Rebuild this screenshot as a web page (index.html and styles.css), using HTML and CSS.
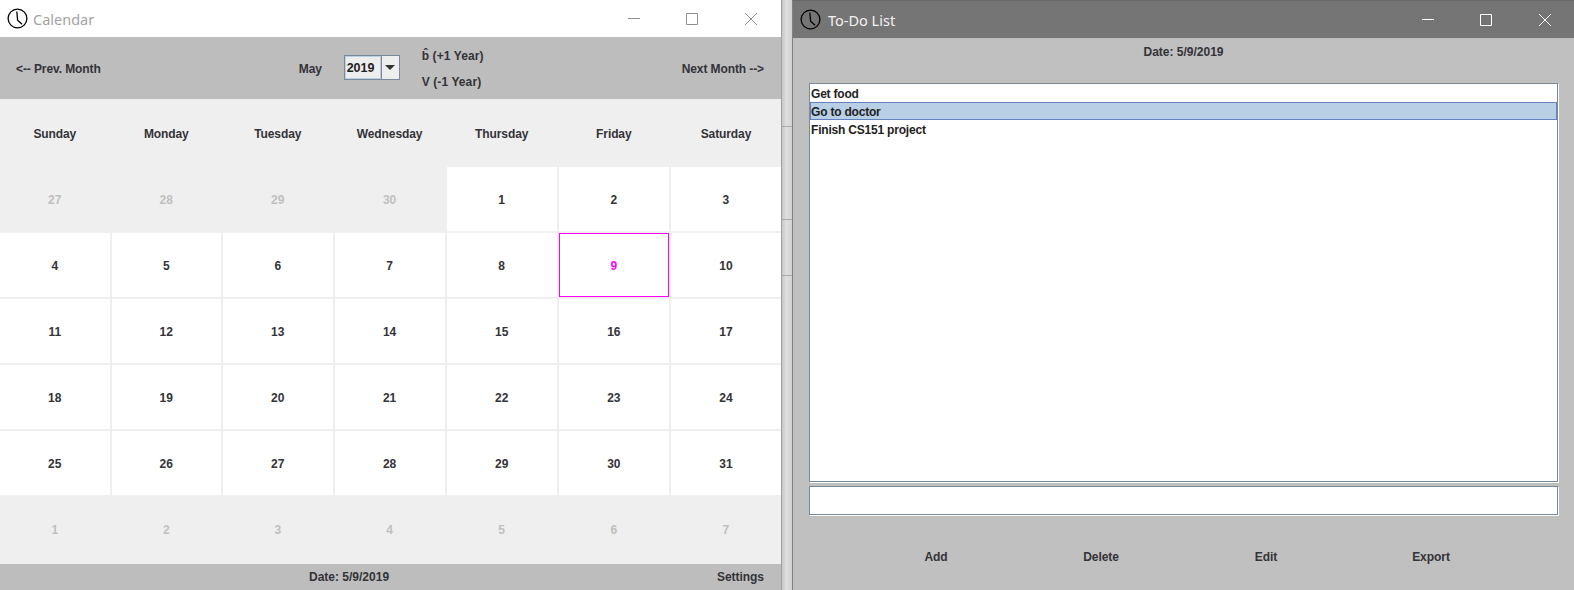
FILE: index.html
```html
<!DOCTYPE html>
<html lang="en">
<head>
<meta charset="utf-8">
<title>Calendar and To-Do List</title>
<link rel="stylesheet" href="styles.css">
</head>
<body>
<svg class="defs" width="0" height="0" aria-hidden="true">
  <symbol id="clock" viewBox="0 0 21 21">
    <circle cx="10.5" cy="10.5" r="9.4" fill="none" stroke="#000" stroke-width="1.3"/>
    <path d="M9.8 3.5 L10.6 12.2 L15 16.2" fill="none" stroke="#000" stroke-width="1.3"/>
  </symbol>
  <symbol id="min" viewBox="0 0 12 12"><path d="M0 5.5H12" stroke="currentColor" fill="none"/></symbol>
  <symbol id="max" viewBox="0 0 12 12"><path d="M.5 .5H11.5V11.5H.5Z" stroke="currentColor" fill="none"/></symbol>
  <symbol id="close" viewBox="0 0 12 12"><path d="M0 0L12 12M12 0L0 12" stroke="currentColor" fill="none"/></symbol>
</svg>
<main class="desktop">
  <section class="window cal">
    <header class="titlebar light">
      <svg class="appicon"><use href="#clock"/></svg>
      <span class="title">Calendar</span>
      <div class="controls">
        <svg class="ctl"><use href="#min"/></svg>
        <svg class="ctl"><use href="#max"/></svg>
        <svg class="ctl ctl-close"><use href="#close"/></svg>
      </div>
    </header>
    <div class="toolbar">
      <span class="tight">&lt;-- Prev. Month</span>
      <div class="center">
        <span class="month">May</span>
        <div class="combo"><span class="combo-val">2019</span><span class="combo-btn"><i class="arrow"></i></span></div>
        <div class="years"><span>b̂ (+1 Year)</span><span>V (-1 Year)</span></div>
      </div>
      <span class="tight">Next Month --&gt;</span>
    </div>
    <div class="weekdays">
      <span>Sunday</span><span>Monday</span><span>Tuesday</span><span>Wednesday</span><span>Thursday</span><span>Friday</span><span>Saturday</span>
    </div>
    <div class="grid">
      <div class="cell off">27</div><div class="cell off">28</div><div class="cell off">29</div><div class="cell off">30</div><div class="cell">1</div><div class="cell">2</div><div class="cell">3</div>
      <div class="cell">4</div><div class="cell">5</div><div class="cell">6</div><div class="cell">7</div><div class="cell">8</div><div class="cell today">9</div><div class="cell">10</div>
      <div class="cell">11</div><div class="cell">12</div><div class="cell">13</div><div class="cell">14</div><div class="cell">15</div><div class="cell">16</div><div class="cell">17</div>
      <div class="cell">18</div><div class="cell">19</div><div class="cell">20</div><div class="cell">21</div><div class="cell">22</div><div class="cell">23</div><div class="cell">24</div>
      <div class="cell">25</div><div class="cell">26</div><div class="cell">27</div><div class="cell">28</div><div class="cell">29</div><div class="cell">30</div><div class="cell">31</div>
      <div class="cell off">1</div><div class="cell off">2</div><div class="cell off">3</div><div class="cell off">4</div><div class="cell off">5</div><div class="cell off">6</div><div class="cell off">7</div>
    </div>
    <footer class="statusbar">
      <span class="status-date">Date: 5/9/2019</span>
      <span class="status-settings">Settings</span>
    </footer>
  </section>
  <div class="strip">
    <div class="seg seg-a"></div><div class="seg seg-b"></div><div class="seg seg-c"></div><div class="seg seg-d"></div>
  </div>
  <section class="window todo">
    <header class="titlebar dark">
      <svg class="appicon"><use href="#clock"/></svg>
      <span class="title">To-Do List</span>
      <div class="controls">
        <svg class="ctl"><use href="#min"/></svg>
        <svg class="ctl"><use href="#max"/></svg>
        <svg class="ctl ctl-close"><use href="#close"/></svg>
      </div>
    </header>
    <div class="todo-body">
      <div class="todo-date">Date: 5/9/2019</div>
      <ul class="list">
        <li>Get food</li>
        <li class="selected">Go to doctor</li>
        <li>Finish CS151 project</li>
      </ul>
      <div class="input"></div>
      <div class="actions">
        <span>Add</span><span>Delete</span><span>Edit</span><span>Export</span>
      </div>
    </div>
  </section>
</main>
</body>
</html>
```

FILE: styles.css
```css
* { box-sizing: border-box; }
html, body { margin: 0; height: 100%; overflow: hidden; }
body {
  font: bold 12px "Liberation Sans", Arial, sans-serif;
  color: #333338;
}
.defs { position: absolute; }
.desktop { display: flex; width: 1574px; height: 590px; }

.window { display: flex; flex-direction: column; height: 590px; }
.cal { width: 781px; background: #efefef; }
.todo { flex: 1; background: #c0c0c0; }

.titlebar { display: flex; align-items: center; flex: none; font-family: "Noto Sans", sans-serif; font-weight: 400; font-size: 14.5px; }
.titlebar.light { height: 37px; background: #fff; color: #a3a3a3; padding-left: 7px; }
.titlebar.dark { height: 38px; background: #757575; border-top: 1px solid #6a6a6a; color: #f2f2f2; padding-left: 7px; }
.appicon { width: 21px; height: 21px; flex: none; }
.title { margin-left: 5px; }
.dark .title { margin-left: 7px; }
.controls { display: flex; margin-left: auto; color: #8e8e8e; gap: 46px; padding-right: 24px; }
.dark .controls { color: #fff; padding-right: 23px; }
.ctl { width: 12px; height: 12px; display: block; }
.ctl-close { margin-left: 1px; }

.toolbar {
  flex: none; height: 62px; background: #bdbdbd;
  display: flex; align-items: center; justify-content: space-between;
  padding: 2px 17px 0 16px;
}
.tight { letter-spacing: -0.1px; }
.center { display: flex; align-items: center; }
.month { width: 45px; }
.combo { display: flex; width: 56px; height: 25px; margin-top: -4px; border: 1px solid #7a8a99; background: #eeeeee; }
.combo-val { width: 36px; padding-left: 1px; line-height: 23px; border: 1px solid #b8cfe5; font-size: 12.5px; color: #222; }
.combo-btn { flex: 1; display: flex; align-items: center; justify-content: center; border-left: 1px solid #7a8a99; }
.arrow { width: 0; height: 0; border: 5px solid transparent; border-top: 5px solid #333; border-bottom: 0; }
.years { display: flex; flex-direction: column; gap: 12px; margin-left: 22px; width: 62px; white-space: nowrap; letter-spacing: 0.1px; }
.years span { line-height: 14px; }

.weekdays {
  flex: none; height: 68px; padding-top: 2px;
  display: grid; grid-template-columns: repeat(3, 109.5px) repeat(4, 1fr); column-gap: 2px;
  align-items: center; text-align: center;
  letter-spacing: -0.1px;
}
.grid {
  flex: 1; min-height: 0;
  display: grid; grid-template-columns: repeat(3, 109.5px) repeat(4, 1fr); grid-auto-rows: 64px; gap: 2px;
}
.cell { background: #fff; display: flex; align-items: center; justify-content: center; padding-top: 2px; }
.cell.off { background: #efefef; color: #c0c0c0; }
.cell.today { border: 1px solid #ff00ff; color: #ff00ff; }

.statusbar { flex: none; height: 26px; background: #bdbdbd; display: flex; align-items: center; padding-right: 17px; }
.status-date { margin-left: 309px; }
.status-settings { margin-left: auto; letter-spacing: -0.05px; }

.strip { flex: none; width: 12px; display: flex; flex-direction: column; border-left: 1px solid #a0a0a0; border-right: 1px solid #808080; }
.seg { background: linear-gradient(to right, #c8c8c8, #dedede 45%, #d2d2d2); border-bottom: 1px solid #a8a8a8; }
.seg-a { height: 127px; }
.seg-b { height: 93px; }
.seg-c { height: 56px; }
.seg-d { flex: 1; border-bottom: 0; }

.todo-body { flex: 1; display: flex; flex-direction: column; padding: 0 16px; }
.todo-date { height: 45px; padding-top: 7px; line-height: 14px; text-align: center; }
.list {
  list-style: none; margin: 0; padding: 0;
  height: 399px; background: #fff;
  border: 1px solid #7a8a99; box-shadow: 1px 1px 0 #fff;
}
.list li { height: 18px; line-height: 20px; padding-left: 1px; color: #222; letter-spacing: -0.2px; }
.list li.selected { background: #b8cfe5; border: 1px solid #6382bf; padding-left: 0; line-height: 18px; }
.input {
  height: 29px; margin-top: 4px; background: #fff;
  border: 1px solid #7a8a99; box-shadow: 1px 1px 0 #fff;
}
.actions {
  width: 660px; margin: 35px auto 0;
  display: grid; grid-template-columns: repeat(4, 1fr); text-align: center;
  letter-spacing: -0.05px;
}
```
